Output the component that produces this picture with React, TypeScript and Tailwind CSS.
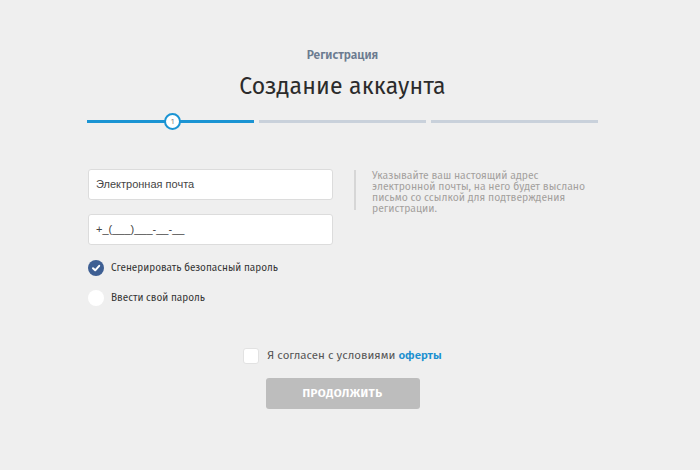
import React from 'react';

const sans = { fontFamily: '"Fira Sans", "Noto Sans", "Open Sans", sans-serif' };

const Step: React.FC<{ active?: boolean; num?: number }> = ({ active, num }) => (
  <div className="relative flex-1 h-[3px] flex items-center">
    <div className={active ? 'w-full h-[3px] bg-[#1b94d3]' : 'w-full h-[3px] bg-[#c9d1db]'} />
    {num && (
      <div className="absolute left-[77px] top-[-7px] w-[17px] h-[17px] rounded-full bg-white border-2 border-[#1b94d3] flex items-center justify-center text-[8px] text-[#888] leading-none">
        {num}
      </div>
    )}
  </div>
);

const App: React.FC = () => {
  return (
    <div className="w-[700px] h-[470px] bg-[#efefef] overflow-hidden" style={sans}>
      <div className="w-[511px] ml-[87px] pt-[46px]">
        <div className="text-center text-[12px] font-semibold text-[#6b7b90] leading-[18px]">Регистрация</div>
        <h1 className="text-center text-[23px] text-[#2b2b2b] leading-[30px] mt-[7px] tracking-[0.2px]">Создание аккаунта</h1>

        <div className="flex gap-[5px] mt-[19px]">
          <Step active num={1} />
          <Step />
          <Step />
        </div>

        <div className="flex mt-[46px]">
          <div className="w-[245px] ml-[1px] flex flex-col gap-[14px]">
            <div
              className="h-[31px] bg-white border border-[#dcdcdc] rounded-[3px] flex items-center px-[7px] text-[11px] text-[#444]"
              style={{ fontFamily: '"Liberation Sans", Arial, sans-serif' }}
            >
              Электронная почта
            </div>
            <div
              className="h-[31px] bg-white border border-[#dcdcdc] rounded-[3px] flex items-center px-[7px] text-[11px] text-[#444]"
              style={{ fontFamily: '"Liberation Sans", Arial, sans-serif' }}
            >
              +_(___)___-__-__
            </div>
          </div>
          <div className="ml-[21px] mt-[1px] h-[40px] border-l-2 border-[#d6d6d6] pl-[16px] w-[240px] text-[10.4px] leading-[11px] text-[#a3a09d]">
            Указывайте ваш настоящий адрес электронной почты, на него будет выслано письмо со ссылкой для подтверждения регистрации.
          </div>
        </div>

        <div className="flex flex-col gap-[14px] mt-[15px] ml-[1px]">
          <div className="flex items-center gap-[7px]">
            <div className="w-[16px] h-[16px] rounded-full bg-[#3e5f93] flex items-center justify-center">
              <svg width="10" height="10" viewBox="0 0 10 10">
                <path d="M2 5.2 L4.2 7.3 L8.2 2.8" stroke="white" strokeWidth="2" fill="none" strokeLinecap="round" strokeLinejoin="round" />
              </svg>
            </div>
            <span className="text-[10px] text-[#333]">Сгенерировать безопасный пароль</span>
          </div>
          <div className="flex items-center gap-[7px]">
            <div className="w-[16px] h-[16px] rounded-full bg-white" />
            <span className="text-[10px] text-[#333]">Ввести свой пароль</span>
          </div>
        </div>

        <div className="flex flex-col items-center mt-[41px]">
          <div className="flex items-center gap-[8px]">
            <div className="w-[16px] h-[16px] rounded-[3px] bg-white border border-[#e2e2e2]" />
            <span className="text-[11.5px] text-[#555]">
              Я согласен с условиями <span className="text-[#1b8fd0] font-semibold">оферты</span>
            </span>
          </div>
          <button className="mt-[14px] w-[154px] h-[31px] rounded-[3px] bg-[#bdbdbd] text-white text-[11.5px] font-bold tracking-[0.4px]">
            ПРОДОЛЖИТЬ
          </button>
        </div>
      </div>
    </div>
  );
};

export default App;
